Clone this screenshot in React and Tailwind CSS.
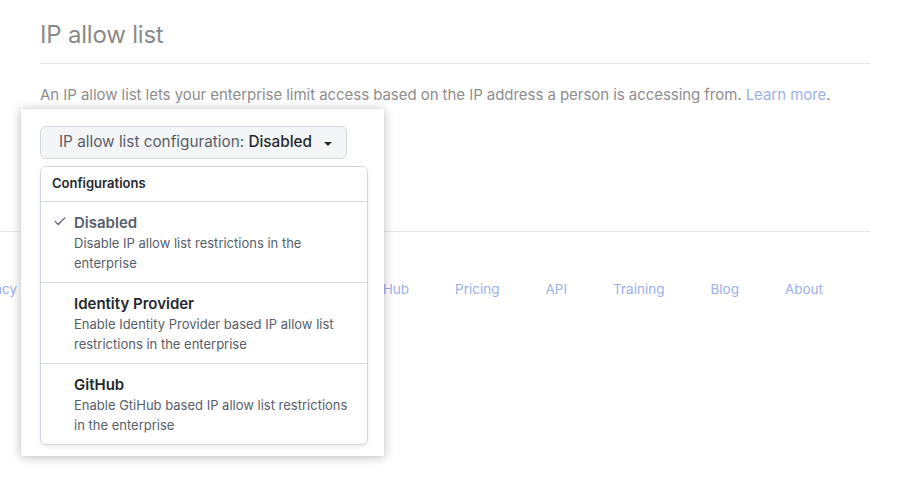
import React from 'react';

const footerLeft = ['Terms', 'Privacy', 'Security', 'Status', 'Docs'];
const footerRight = ['Contact GitHub', 'Pricing', 'API', 'Training', 'Blog', 'About'];

const options = [
  { title: 'Disabled', desc: 'Disable IP allow list restrictions in the enterprise', selected: true },
  { title: 'Identity Provider', desc: 'Enable Identity Provider based IP allow list restrictions in the enterprise' },
  { title: 'GitHub', desc: 'Enable GtiHub based IP allow list restrictions in the enterprise' },
];

function Check() {
  return (
    <svg width="14" height="14" viewBox="0 0 16 16" fill="none" stroke="#57606a" strokeWidth="1.4" strokeLinecap="round" strokeLinejoin="round">
      <path d="M2.5 8.5L6 12l7.5-7.5" />
    </svg>
  );
}

function Caret() {
  return (
    <svg width="16" height="16" viewBox="0 0 16 16" fill="#24292f">
      <path d="M4.427 7.427l3.396 3.396a.25.25 0 00.354 0l3.396-3.396A.25.25 0 0011.396 7H4.604a.25.25 0 00-.177.427z" />
    </svg>
  );
}

export default function App() {
  return (
    <div className="relative w-[911px] h-[478px] overflow-hidden bg-white font-['Inter',sans-serif]">
      {/* faded page behind the popup */}
      <div className="w-[870px] pt-[20px]">
        <div className="ml-[40px] border-b border-[#e8e8e8] pb-[13px]">
          <h2 className="text-[24px] leading-[30px] text-[#8a8a8a] font-normal tracking-[-0.2px]">IP allow list</h2>
        </div>
        <p className="ml-[40px] mt-[20px] text-[15px] leading-[22px] text-[#8e8e8e] tracking-[-0.05px]">
          An IP allow list lets your enterprise limit access based on the IP address a person is accessing from.{' '}
          <span className="text-[#9cb0ea]">Learn more</span>.
        </p>
        <div className="mt-[125px] border-t border-[#e8e8e8]" />
        <div className="flex justify-end gap-[30px] pr-[47px] pt-[47px] text-[13.5px] leading-[20px] text-[#9cb0ea] whitespace-nowrap">
          <div className="flex gap-[46px]">
            {footerLeft.map((l) => (
              <span key={l}>{l}</span>
            ))}
          </div>
          <div className="flex gap-[46px]">
            {footerRight.map((l) => (
              <span key={l}>{l}</span>
            ))}
          </div>
        </div>
      </div>

      {/* popup */}
      <div className="absolute left-[21px] top-[109px] w-[363px] h-[347px] bg-white shadow-[0_1px_10px_rgba(0,0,0,0.28)] pl-[19px] pr-[16px] pt-[17px]">
        <button className="h-[33px] w-[307px] flex items-center gap-[8px] pl-[18px] rounded-[6px] border border-[#d5d8dc] bg-[#f4f5f7] text-[15.3px] text-[#57606a]">
          <span>
            IP allow list configuration: <span className="font-medium text-[#24292f]">Disabled</span>
          </span>
          <Caret />
        </button>
        <div className="mt-[7px] w-[328px] rounded-[6px] border border-[#d0d7de] bg-white shadow-[0_2px_4px_rgba(0,0,0,0.08)]">
          <div className="h-[35px] flex items-center px-[11px] border-b border-[#d8dee4] text-[13px] font-semibold text-[#24292f]">
            Configurations
          </div>
          {options.map((o, i) => (
            <div
              key={o.title}
              className={`flex pl-[12px] pr-[12px] pt-[10px] pb-[9px] ${i < options.length - 1 ? 'border-b border-[#d8dee4]' : ''}`}
            >
              <div className="w-[21px] shrink-0 pt-[2px]">{o.selected && <Check />}</div>
              <div>
                <div className={`text-[15px] leading-[21px] font-semibold ${o.selected ? 'text-[#57606a]' : 'text-[#24292f]'}`}>
                  {o.title}
                </div>
                <div className="text-[13px] leading-[20px] text-[#57606a]">{o.desc}</div>
              </div>
            </div>
          ))}
        </div>
      </div>
    </div>
  );
}
